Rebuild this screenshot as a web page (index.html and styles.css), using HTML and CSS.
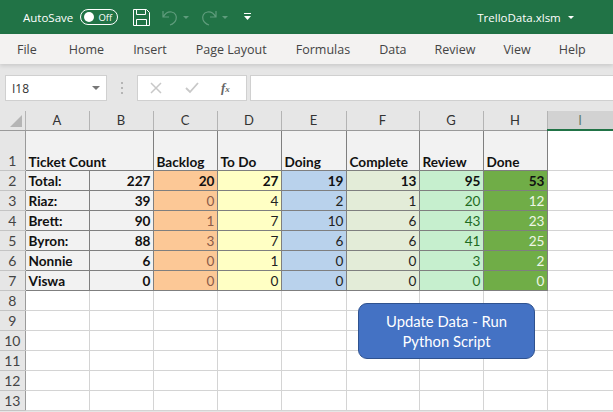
FILE: index.html
```html
<!DOCTYPE html>
<html>
<head>
    <meta charset="UTF-8">
    <title>TrelloData.xlsm</title>
    <link rel="stylesheet" href="styles.css">
</head>
<body>
    <header class="titlebar">
        <span class="autosave">AutoSave</span>
        <span class="toggle"><i class="knob"></i><span>Off</span></span>
        <svg class="save" width="17" height="17" viewBox="0 0 17 17" fill="none" stroke="#fff" stroke-width="1">
            <path d="M.5.5h13l3 3v13H.5z"/>
            <path d="M3.5.5v5h9v-5M3.5 16.5v-6h10v6"/>
        </svg>
        <svg class="undo" width="16" height="17" viewBox="0 0 16 17" fill="none" stroke="#5f9c7c" stroke-width="1.2">
            <path d="M1 2v6h6M1.500 7.500C3.500 4 6.500 2.500 9.500 3c4 .7 5.500 4 4.500 7.500-.8 2.500-3 4.500-6 5.500"/>
        </svg>
        <span class="mini-caret dim"></span>
        <svg class="redo" width="16" height="17" viewBox="0 0 16 17" fill="none" stroke="#5f9c7c" stroke-width="1.2">
            <path d="M15 2v6H9M14.500 7.500C12.500 4 9.500 2.500 6.500 3c-4 .7-5.500 4-4.500 7.500.8 2.500 3 4.500 6 5.500"/>
        </svg>
        <span class="mini-caret dim"></span>
        <svg class="qat" width="9" height="8" viewBox="0 0 9 8" fill="#fff">
            <rect x="1" y="0" width="7" height="1"/>
            <path d="M1 3h7L4.500 7z"/>
        </svg>
        <span class="filename">TrelloData.xlsm</span>
        <span class="mini-caret"></span>
    </header>

    <nav class="ribbon">
        <a class="tab-file">File</a>
        <a class="tab-home">Home</a>
        <a class="tab-insert">Insert</a>
        <a class="tab-layout">Page Layout</a>
        <a class="tab-formulas">Formulas</a>
        <a class="tab-data">Data</a>
        <a class="tab-review">Review</a>
        <a class="tab-view">View</a>
        <a class="tab-help">Help</a>
    </nav>

    <div class="formulabar">
        <div class="namebox"><span>I18</span><i class="namebox-caret"></i></div>
        <div class="grip"><i></i><i></i><i></i></div>
        <div class="fx-buttons">
            <svg width="12" height="12" viewBox="0 0 12 12" stroke="#c8c8c8" stroke-width="1.500"><path d="M1 1l10 10M11 1L1 11"/></svg>
            <svg width="14" height="12" viewBox="0 0 14 12" fill="none" stroke="#c8c8c8" stroke-width="1.800"><path d="M1 6l4 4 8-9"/></svg>
            <span class="fx">f<span class="fx-x">x</span></span>
        </div>
        <div class="formula-input"></div>
    </div>

    <div class="sheet">
        <table class="grid">
            <colgroup>
                <col class="c-gutter">
                <col class="c-a"><col class="c-b"><col class="c-c"><col class="c-d">
                <col class="c-e"><col class="c-f"><col class="c-g"><col class="c-h"><col class="c-i">
            </colgroup>
            <thead>
                <tr>
                    <th class="corner"><i></i></th>
                    <th>A</th><th>B</th><th>C</th><th>D</th><th>E</th><th>F</th><th>G</th><th>H</th>
                    <th class="active">I</th>
                </tr>
            </thead>
            <tbody>
                <tr class="row-title">
                    <th>1</th>
                    <td class="lbl" colspan="2">Ticket Count</td>
                    <td class="lbl">Backlog</td><td class="lbl">To Do</td><td class="lbl">Doing</td>
                    <td class="lbl">Complete</td><td class="lbl">Review</td><td class="lbl">Done</td>
                    <td class="blank"></td>
                </tr>
                <tr class="row-total">
                    <th>2</th><td class="lbl">Total:</td><td class="num">227</td>
                    <td class="backlog">20</td><td class="todo">27</td><td class="doing">19</td>
                    <td class="complete">13</td><td class="review">95</td><td class="done">53</td>
                    <td class="blank"></td>
                </tr>
                <tr>
                    <th>3</th><td class="lbl">Riaz:</td><td class="num">39</td>
                    <td class="backlog">0</td><td class="todo">4</td><td class="doing">2</td>
                    <td class="complete">1</td><td class="review">20</td><td class="done">12</td>
                    <td class="blank"></td>
                </tr>
                <tr>
                    <th>4</th><td class="lbl">Brett:</td><td class="num">90</td>
                    <td class="backlog">1</td><td class="todo">7</td><td class="doing">10</td>
                    <td class="complete">6</td><td class="review">43</td><td class="done">23</td>
                    <td class="blank"></td>
                </tr>
                <tr>
                    <th>5</th><td class="lbl">Byron:</td><td class="num">88</td>
                    <td class="backlog">3</td><td class="todo">7</td><td class="doing">6</td>
                    <td class="complete">6</td><td class="review">41</td><td class="done">25</td>
                    <td class="blank"></td>
                </tr>
                <tr>
                    <th>6</th><td class="lbl">Nonnie</td><td class="num">6</td>
                    <td class="backlog">0</td><td class="todo">1</td><td class="doing">0</td>
                    <td class="complete">0</td><td class="review">3</td><td class="done">2</td>
                    <td class="blank"></td>
                </tr>
                <tr>
                    <th>7</th><td class="lbl">Viswa</td><td class="num">0</td>
                    <td class="backlog">0</td><td class="todo">0</td><td class="doing">0</td>
                    <td class="complete">0</td><td class="review">0</td><td class="done">0</td>
                    <td class="blank"></td>
                </tr>
                <tr class="empty"><th>8</th><td></td><td></td><td></td><td></td><td></td><td></td><td></td><td></td><td></td></tr>
                <tr class="empty"><th>9</th><td></td><td></td><td></td><td></td><td></td><td></td><td></td><td></td><td></td></tr>
                <tr class="empty"><th>10</th><td></td><td></td><td></td><td></td><td></td><td></td><td></td><td></td><td></td></tr>
                <tr class="empty"><th>11</th><td></td><td></td><td></td><td></td><td></td><td></td><td></td><td></td><td></td></tr>
                <tr class="empty"><th>12</th><td></td><td></td><td></td><td></td><td></td><td></td><td></td><td></td><td></td></tr>
                <tr class="empty"><th>13</th><td></td><td></td><td></td><td></td><td></td><td></td><td></td><td></td><td></td></tr>
            </tbody>
        </table>
        <div class="macro-button">Update Data - Run<br>Python Script</div>
    </div>
</body>
</html>
```

FILE: styles.css
```css
html, body {
    margin: 0;
    padding: 0;
}

body {
    width: 613px;
    height: 412px;
    overflow: hidden;
    background-color: #e6e6e6;
    font-family: "Open Sans", "Noto Sans", sans-serif;
}

/* title bar */
.titlebar {
    display: flex;
    align-items: center;
    height: 34px;
    padding-left: 23px;
    box-sizing: border-box;
    background-color: #217346;
    color: #ffffff;
    font-size: 11.5px;
}

.toggle {
    display: flex;
    align-items: center;
    justify-content: space-between;
    box-sizing: border-box;
    width: 38px;
    height: 16px;
    margin-left: 7px;
    padding: 0 5px 0 3px;
    border: 1px solid #ffffff;
    border-radius: 8px;
    font-size: 9.5px;
}

.knob {
    width: 10px;
    height: 10px;
    border-radius: 50%;
    background-color: #ffffff;
}

.save { margin-left: 15px; }
.undo { margin-left: 12px; }
.redo { margin-left: 12px; }
.qat { margin-left: 15px; }

.mini-caret {
    width: 0;
    height: 0;
    margin-left: 5px;
    border-left: 3px solid transparent;
    border-right: 3px solid transparent;
    border-top: 3px solid #ffffff;
}

.mini-caret.dim { border-top-color: #5f9c7c; }

.filename {
    margin-left: 225px;
    margin-right: 2px;
}

/* ribbon tabs */
.ribbon {
    display: flex;
    align-items: center;
    height: 30px;
    background-color: #f3f2f1;
    color: #444444;
    font-size: 12.500px;
    box-shadow: 0 2px 4px rgba(0, 0, 0, 0.12);
    position: relative;
}

.ribbon a { white-space: nowrap; }
.tab-file { margin-left: 17px; }
.tab-home { margin-left: 32px; }
.tab-insert { margin-left: 29px; }
.tab-layout { margin-left: 29px; }
.tab-formulas { margin-left: 29px; }
.tab-data { margin-left: 29px; }
.tab-review { margin-left: 28px; }
.tab-view { margin-left: 28px; }
.tab-help { margin-left: 28px; }

/* formula bar */
.formulabar {
    display: flex;
    align-items: stretch;
    height: 26px;
    margin-top: 11px;
}

.namebox {
    display: flex;
    align-items: center;
    justify-content: space-between;
    box-sizing: border-box;
    width: 102px;
    margin-left: 5px;
    padding: 0 6px 0 6px;
    background-color: #ffffff;
    border: 1px solid #d0d0d0;
    font-size: 12px;
    color: #333333;
}

.namebox-caret {
    width: 0;
    height: 0;
    border-left: 4px solid transparent;
    border-right: 4px solid transparent;
    border-top: 4px solid #777777;
}

.grip {
    display: flex;
    flex-direction: column;
    justify-content: center;
    gap: 3px;
    width: 30px;
    align-items: center;
}

.grip i {
    width: 2px;
    height: 2px;
    background-color: #b5b5b5;
}

.fx-buttons {
    display: flex;
    align-items: center;
    box-sizing: border-box;
    width: 110px;
    padding-left: 12px;
    gap: 23px;
    background-color: #ffffff;
    border: 1px solid #d0d0d0;
}

.fx {
    margin-left: -1px;
    font-family: "Liberation Serif", serif;
    font-style: italic;
    font-weight: bold;
    font-size: 13px;
    color: #666666;
}

.fx-x { font-size: 9px; }

.formula-input {
    flex: 1;
    margin-left: 3px;
    background-color: #ffffff;
    border: 1px solid #d0d0d0;
    border-right: none;
}

/* sheet */
.sheet {
    position: relative;
    margin-top: 10px;
}

.grid {
    table-layout: fixed;
    width: 613px;
    border-collapse: collapse;
    background-color: #ffffff;
    font-family: Lato, "Liberation Sans", sans-serif;
    font-size: 13.6px;
}

.c-gutter { width: 25px; }
.c-a, .c-b, .c-c, .c-d, .c-g, .c-h { width: 64px; }
.c-e { width: 65px; }
.c-f { width: 73px; }
.c-i { width: 66px; }

.grid thead th {
    height: 18px;
    padding: 0;
    background-color: #e6e6e6;
    border-right: 1px solid #b4b4b4;
    border-bottom: 1px solid #9a9a9a;
    font-weight: normal;
    color: #333333;
    font-size: 13px;
}

.grid thead th.active {
    background-color: #d2d2d2;
    border-bottom: 2px solid #217346;
    color: #5f7f6f;
}

.corner { position: relative; }

.corner i {
    position: absolute;
    right: 3px;
    bottom: 3px;
    width: 0;
    height: 0;
    border-left: 12px solid transparent;
    border-bottom: 12px solid #b5b5b5;
}

.grid tbody th {
    height: 19px;
    padding: 0;
    background-color: #e6e6e6;
    border-right: 1px solid #9a9a9a;
    border-bottom: 1px solid #c4c4c4;
    font-weight: normal;
    font-size: 14px;
    color: #444444;
}

.grid td {
    padding: 0 2px 0 3px;
    height: 19px;
    box-sizing: content-box;
    border: 1px solid #7f7f7f;
    text-align: right;
    white-space: nowrap;
    overflow: hidden;
    color: #222222;
}

.grid tr.row-title th,
.grid tr.row-title td {
    height: 39px;
    vertical-align: bottom;
}

.grid tr.row-title th { line-height: 19px; }

.grid td.lbl {
    text-align: left;
    font-weight: bold;
    background-color: #f2f2f2;
    color: #111111;
}

.grid td.num {
    font-weight: bold;
    background-color: #f2f2f2;
    color: #111111;
}

.grid td.backlog { background-color: #fcc896; color: #8a5a48; }
.grid td.todo { background-color: #ffffc4; }
.grid td.doing { background-color: #b9d2ec; }
.grid td.complete { background-color: #e3ecd8; }
.grid td.review { background-color: #c6efce; color: #1f6b1f; }
.grid td.done { background-color: #70ad47; color: #eef6e6; }

.grid tr.row-total td {
    font-weight: bold;
    color: #111111;
}

.grid tr.empty td,
.grid td.blank {
    border: 1px solid #d4d4d4;
    background-color: #ffffff;
}

.macro-button {
    position: absolute;
    left: 358px;
    top: 192px;
    box-sizing: border-box;
    width: 177px;
    height: 56px;
    display: flex;
    align-items: center;
    justify-content: center;
    text-align: center;
    background-color: #4472c4;
    border: 1px solid #2f528f;
    border-radius: 9px;
    color: #ffffff;
    font-family: Lato, "Liberation Sans", sans-serif;
    font-size: 14.8px;
    line-height: 20px;
}
```
